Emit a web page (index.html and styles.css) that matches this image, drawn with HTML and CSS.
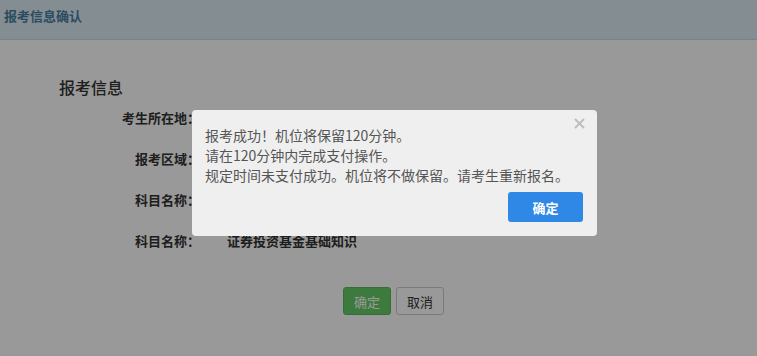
FILE: index.html
```html
<!DOCTYPE html>
<html lang="zh-CN">
<head>
<meta charset="utf-8">
<title>报考信息确认</title>
<link rel="stylesheet" href="styles.css">
</head>
<body>
<header class="topbar"><h1 class="topbar-title">报考信息确认</h1></header>
<main class="content">
  <h2 class="section-title">报考信息</h2>
  <div class="form">
    <div class="label">考生所在地：</div><div class="value">上海</div>
    <div class="label">报考区域：</div><div class="value">上海</div>
    <div class="label">科目名称：</div><div class="value">证券市场基本法律法规</div>
    <div class="label">科目名称：</div><div class="value">证券投资基金基础知识</div>
  </div>
  <div class="actions">
    <button class="btn btn-ok">确定</button>
    <button class="btn btn-cancel">取消</button>
  </div>
</main>
<div class="overlay"></div>
<div class="dialog">
  <svg class="dialog-close" width="11" height="11" viewBox="0 0 11 11"><path d="M1 1L10 10M10 1L1 10" stroke="#bdbdbd" stroke-width="1.8" fill="none"/></svg>
  <div class="dialog-text">
    <p>报考成功！机位将保留120分钟。</p>
    <p>请在120分钟内完成支付操作。</p>
    <p>规定时间未支付成功。机位将不做保留。请考生重新报名。</p>
  </div>
  <div class="dialog-footer"><button class="dialog-btn">确定</button></div>
</div>
</body>
</html>
```
FILE: styles.css
```css
* { box-sizing: border-box; }
html, body { margin: 0; padding: 0; }
body {
  background: #fff;
  font-family: "Noto Sans CJK SC", "Liberation Sans", sans-serif;
  color: #333;
  width: 757px;
  height: 356px;
  overflow: hidden;
  position: relative;
}
.topbar {
  height: 40px;
  background: #dbebf3;
  border-bottom: 1px solid #c4dde2;
  padding: 6px 0 0 4px;
}
.topbar-title {
  margin: 0;
  font-size: 13px;
  line-height: 20px;
  font-weight: bold;
  color: #477fa0;
}
.content { padding: 0; }
.section-title {
  margin: 37px 0 0 59px;
  font-size: 16px;
  line-height: 20px;
  font-weight: 500;
  color: #333;
}
.form {
  display: grid;
  grid-template-columns: 200px 1fr;
  column-gap: 27px;
  grid-auto-rows: 41px;
  font-size: 13px;
  line-height: 41px;
}
.label { text-align: right; font-weight: bold; color: #333; }
.value { font-weight: bold; color: #333; }
.actions {
  margin-top: 26px;
  padding-left: 343px;
  display: flex;
  gap: 5px;
}
.btn {
  width: 48px;
  height: 28px;
  font-family: inherit;
  font-size: 13px;
  border-radius: 3px;
  padding: 0;
  cursor: pointer;
}
.btn-ok { background: #66cc66; border: 1px solid #5cb85c; color: #fff; }
.btn-cancel { background: #fff; border: 1px solid #ccc; color: #333; }
.overlay {
  position: absolute;
  inset: 0;
  background: rgba(0, 0, 0, 0.4);
}
.dialog {
  position: absolute;
  left: 192px;
  top: 110px;
  width: 405px;
  height: 126px;
  background: #efefef;
  border-radius: 4px;
  padding: 15px 14px 14px 13px;
}
.dialog-close {
  position: absolute;
  left: 382px;
  top: 8px;
}
.dialog-text {
  font-size: 14px;
  line-height: 20px;
  color: #555;
}
.dialog-text p { margin: 0; }
.dialog-footer {
  margin-top: 7px;
  display: flex;
  justify-content: flex-end;
}
.dialog-btn {
  width: 75px;
  height: 30px;
  border: 0;
  border-radius: 3px;
  background: #2f88e5;
  color: #fff;
  font-family: inherit;
  font-size: 13px;
  font-weight: bold;
  padding: 0;
}
```
